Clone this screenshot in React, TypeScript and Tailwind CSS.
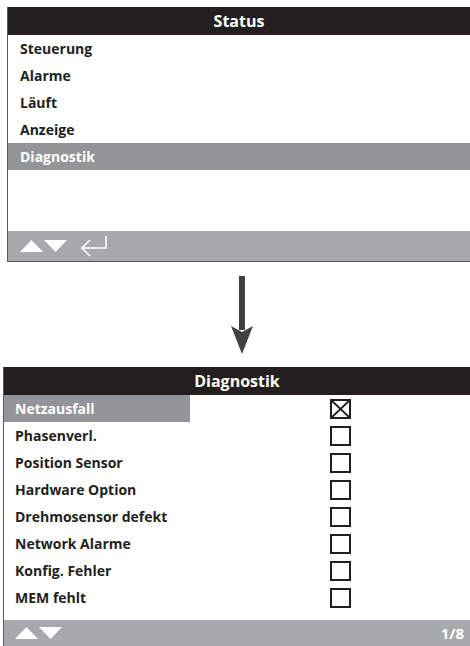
const FONT = "font-['Open_Sans',sans-serif]";

const STATUS_ITEMS = ["Steuerung", "Alarme", "Läuft", "Anzeige", "Diagnostik"];
const DIAG_ITEMS = [
  { label: "Netzausfall", checked: true },
  { label: "Phasenverl.", checked: false },
  { label: "Position Sensor", checked: false },
  { label: "Hardware Option", checked: false },
  { label: "Drehmosensor defekt", checked: false },
  { label: "Network Alarme", checked: false },
  { label: "Konfig. Fehler", checked: false },
  { label: "MEM fehlt", checked: false },
];

function UpDown() {
  return (
    <svg width="48" height="14" viewBox="0 0 48 14" aria-hidden="true">
      <polygon points="0,13 11.5,1 23,13" fill="#fff" />
      <polygon points="24,1 47,1 35.5,13" fill="#fff" />
    </svg>
  );
}

function EnterIcon() {
  return (
    <svg width="28" height="22" viewBox="0 0 28 22" aria-hidden="true">
      <path d="M26 1 V13 H2 M10 5 L2 13 L10 21" fill="none" stroke="#fff" strokeWidth="1.6" />
    </svg>
  );
}

function Checkbox({ checked }: { checked: boolean }) {
  return (
    <div className="relative h-[20px] w-[21px] border-2 border-[#231f20]">
      {checked && (
        <svg className="absolute inset-0" width="17" height="16" viewBox="0 0 17 16" aria-hidden="true">
          <path d="M0 0 L17 16 M17 0 L0 16" stroke="#231f20" strokeWidth="2" />
        </svg>
      )}
    </div>
  );
}

export default function App() {
  return (
    <div className={`${FONT} flex h-[646px] w-[470px] flex-col overflow-hidden bg-white`}>
      {/* Status screen */}
      <div className="ml-[7px] mt-[7px] flex h-[255px] flex-col border-b border-l border-[#58595b]">
        <div className="flex h-[28px] items-center justify-center bg-[#231f20] text-[16px] font-bold text-white">
          Status
        </div>
        {STATUS_ITEMS.map((item) => {
          const active = item === "Diagnostik";
          return (
            <div
              key={item}
              className={`flex h-[27px] items-center pl-[12px] text-[14px] font-bold ${
                active ? "bg-[#939598] text-white" : "text-[#231f20]"
              }`}
            >
              {item}
            </div>
          );
        })}
        <div className="flex-1" />
        <div className="flex h-[30px] items-center gap-[12px] bg-[#a7a9ac] pl-[12px]">
          <UpDown />
          <EnterIcon />
        </div>
      </div>

      {/* transition arrow */}
      <div className="flex h-[105px] justify-center pl-[14px] pt-[14px]">
        <svg width="22" height="78" viewBox="0 0 22 78" aria-hidden="true">
          <rect x="8" y="0" width="6" height="54" fill="#414042" />
          <polygon points="0,50 11,56 22,50 11,78" fill="#414042" />
        </svg>
      </div>

      {/* Diagnostik screen */}
      <div className="ml-[3px] flex flex-1 flex-col border-l border-[#58595b]">
        <div className="flex h-[28px] items-center justify-center bg-[#231f20] text-[16px] font-bold text-white">
          Diagnostik
        </div>
        {DIAG_ITEMS.map((item, i) => (
          <div key={item.label} className="flex h-[27px] items-center">
            <div
              className={`flex h-full w-[186px] items-center pl-[11px] text-[14px] font-bold ${
                i === 0 ? "bg-[#939598] text-white" : "text-[#231f20]"
              }`}
            >
              {item.label}
            </div>
            <div className="ml-[140px]">
              <Checkbox checked={item.checked} />
            </div>
          </div>
        ))}
        <div className="flex-1" />
        <div className="flex h-[26px] items-center justify-between bg-[#a7a9ac] pl-[11px] pr-[6px]">
          <UpDown />
          <span className="text-[15px] font-bold text-white">1/8</span>
        </div>
      </div>
    </div>
  );
}
